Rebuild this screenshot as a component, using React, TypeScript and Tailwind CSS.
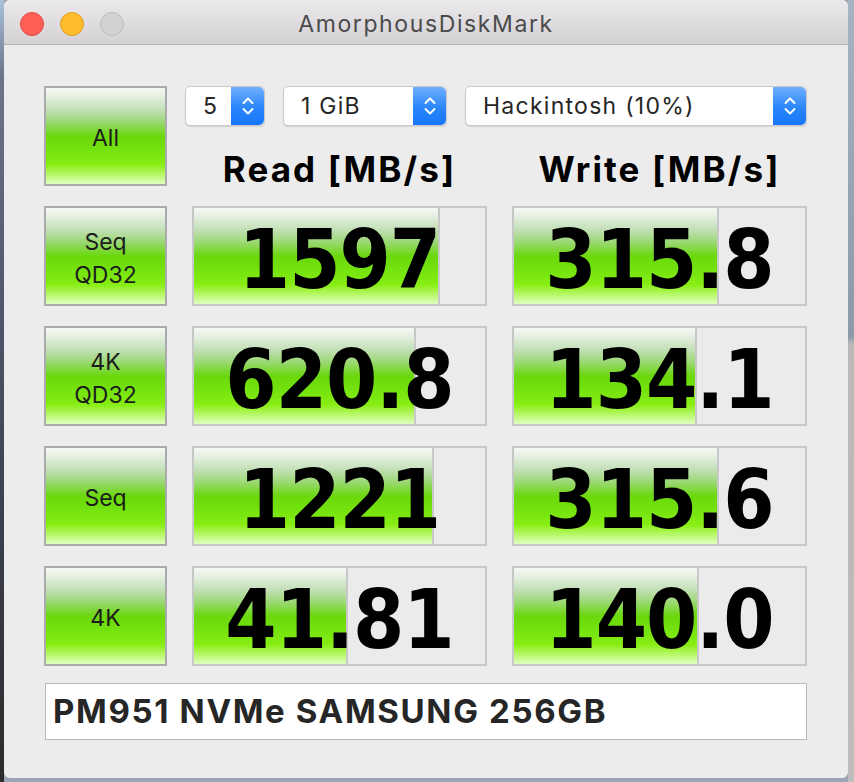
import React from "react";

const GREEN =
  "bg-[linear-gradient(to_bottom,#f6f8f5_0%,#e2eedd_10%,#c4e0b8_22%,#9ad872_36%,#6ad80c_50%,#76e40e_66%,#88ee14_80%,#aef657_88%,#e0ffc0_100%)]";

type Row = {
  label: string[];
  read: string;
  readPct: number;
  write: string;
  writePct: number;
};

const rows: Row[] = [
  { label: ["Seq", "QD32"], read: "1597", readPct: 84.5, write: "315.8", writePct: 70.4 },
  { label: ["4K", "QD32"], read: "620.8", readPct: 76.3, write: "134.1", writePct: 62.9 },
  { label: ["Seq"], read: "1221", readPct: 82.5, write: "315.6", writePct: 70.4 },
  { label: ["4K"], read: "41.81", readPct: 52.9, write: "140.0", writePct: 63.6 },
];

function Stepper() {
  return (
    <div className="w-[33px] h-full rounded-r-[5px] bg-[linear-gradient(to_bottom,#6eb0fd,#2a86fb_55%,#1576fa)] flex items-center justify-center">
      <svg width="14" height="22" viewBox="0 0 14 22" fill="none" stroke="white" strokeWidth="1.9" strokeLinecap="round" strokeLinejoin="round">
        <path d="M2.5 8 L7 3.5 L11.5 8" />
        <path d="M2.5 14 L7 18.5 L11.5 14" />
      </svg>
    </div>
  );
}

function Select({ value, width }: { value: string; width: string }) {
  return (
    <div className={`${width} h-[40px] flex bg-white border border-[#c9c9c9] rounded-[5px] shadow-[0_1px_1px_rgba(0,0,0,0.12)] overflow-hidden`}>
      <div className="flex-1 pl-[17px] pt-[1px] flex items-center text-[23px] text-[#262626] tracking-[0.055em]">{value}</div>
      <Stepper />
    </div>
  );
}

function ResultCell({ value, pct }: { value: string; pct: number }) {
  return (
    <div className="relative w-[295px] h-[100px] border-2 border-[#c8c8c8] bg-[#ebebeb]">
      <div className={`absolute left-0 top-0 bottom-0 border-r-2 border-[#c8c8c8] ${GREEN}`} style={{ width: `${pct}%` }} />
      <div
        className="relative h-full flex items-center justify-center pt-[7px] text-[82px] leading-none font-bold text-black tracking-[-1px]"
        style={{ fontFamily: '"DejaVu Sans Condensed", "DejaVu Sans", sans-serif', fontStretch: "condensed" }}
      >
        {value}
      </div>
    </div>
  );
}

function SideButton({ label }: { label: string[] }) {
  return (
    <div className={`w-[123px] h-[100px] border-2 border-[#ababab] ${GREEN} flex flex-col items-center justify-center pt-[5px] text-[23px] leading-[33px] text-[#1c1c1c]`}>
      {label.map((l) => (
        <span key={l}>{l}</span>
      ))}
    </div>
  );
}

export default function App() {
  return (
    <div className="w-[854px] h-[782px] flex bg-[#9aa6b5]" style={{ fontFamily: "Inter, 'Liberation Sans', sans-serif" }}>
      <div className="w-[4px] h-full bg-[linear-gradient(to_bottom,#a9c2da_0%,#6b7488_10%,#3e4456_60%,#2c2a2a_100%)]" />

      {/* window */}
      <div className="w-[844px] h-[778px] rounded-[6px] overflow-hidden bg-[#ececec] flex flex-col">
        {/* title bar */}
        <div className="h-[45px] shrink-0 relative flex items-center justify-center pt-[4px] border-b border-[#b4b4b4] bg-[linear-gradient(to_bottom,#ebe9eb,#d3d1d3)]">
          <div className="absolute left-[16px] top-[12px] flex gap-[16px]">
            <div className="w-[24px] h-[24px] rounded-full bg-[#fd5f57] border border-[#df4840]" />
            <div className="w-[24px] h-[24px] rounded-full bg-[#fdbc2e] border border-[#dda023]" />
            <div className="w-[24px] h-[24px] rounded-full bg-[#d3d2d3] border border-[#bcbbbc]" />
          </div>
          <span className="text-[23px] text-[#4b4b4b] tracking-[0.07em]">AmorphousDiskMark</span>
        </div>

        {/* content */}
        <div className="pt-[41px] pl-[40px] flex flex-col">
          <div className="flex h-[100px]">
            <SideButton label={["All"]} />
            <div className="ml-[18px] flex flex-col">
              <div className="flex gap-[18px]">
                <Select value="5" width="w-[80px]" />
                <Select value="1 GiB" width="w-[164px]" />
                <Select value="Hackintosh (10%)" width="w-[342px]" />
              </div>
              <div className="pl-[7px] mt-[26px] flex gap-[25px] text-[35px] leading-[34px] font-bold text-black tracking-[0.06em]">
                <div className="w-[295px] text-center">Read [MB/s]</div>
                <div className="w-[295px] text-center">Write [MB/s]</div>
              </div>
            </div>
          </div>

          <div className="mt-[20px] flex flex-col gap-[20px]">
            {rows.map((r) => (
              <div key={r.label.join(" ") + r.read} className="flex gap-[25px]">
                <SideButton label={r.label} />
                <ResultCell value={r.read} pct={r.readPct} />
                <ResultCell value={r.write} pct={r.writePct} />
              </div>
            ))}
          </div>

          <div className="mt-[17px] ml-[1px] w-[762px] h-[57px] bg-white border border-[#b9b9b9] flex items-center pl-[7px] text-[33px] font-bold text-[#262626] tracking-[0.05em]">
            PM951 NVMe SAMSUNG 256GB
          </div>
        </div>
      </div>

      <div className="w-[6px] h-full bg-[linear-gradient(to_bottom,#a5b3c3_0%,#8c99aa_43%,#b8b8b8_44%,#bdbdbd_100%)]" />
    </div>
  );
}
